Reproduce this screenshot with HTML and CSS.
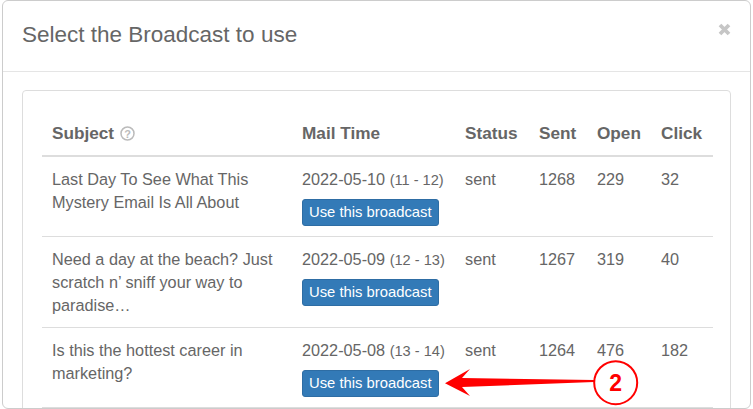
FILE: index.html
```html
<!DOCTYPE html>
<html lang="en">
<head>
    <meta charset="UTF-8">
    <title>Select the Broadcast</title>
    <link rel="stylesheet" href="styles.css">
</head>
<body>
    <div class="modal">
        <div class="modal-header">
            <h4>Select the Broadcast to use</h4>
            <svg class="close" width="13" height="13" viewBox="0 0 13 13">
                <path d="M2 2 L11 11 M11 2 L2 11" stroke="#c6c6c6" stroke-width="3.8" fill="none"/>
            </svg>
        </div>
        <div class="modal-body">
            <div class="panel">
                <table>
                    <colgroup>
                        <col class="col-subject">
                        <col class="col-time">
                        <col class="col-status">
                        <col class="col-sent">
                        <col class="col-open">
                        <col class="col-click">
                    </colgroup>
                    <thead>
                        <tr>
                            <th>Subject
                                <svg class="help" width="15" height="15" viewBox="0 0 15 15">
                                    <circle cx="7.5" cy="7.5" r="6.5" fill="none" stroke="#bbb" stroke-width="1.5"/>
                                    <text x="7.5" y="11.5" text-anchor="middle" class="help-mark">?</text>
                                </svg>
                            </th>
                            <th>Mail Time</th>
                            <th>Status</th>
                            <th>Sent</th>
                            <th>Open</th>
                            <th>Click</th>
                        </tr>
                    </thead>
                    <tbody>
                        <tr>
                            <td>Last Day To See What This Mystery Email Is All About</td>
                            <td>2022-05-10 <small>(11 - 12)</small><a class="btn">Use this broadcast</a></td>
                            <td>sent</td>
                            <td>1268</td>
                            <td>229</td>
                            <td>32</td>
                        </tr>
                        <tr>
                            <td>Need a day at the beach? Just scratch n’ sniff your way to paradise…</td>
                            <td>2022-05-09 <small>(12 - 13)</small><a class="btn">Use this broadcast</a></td>
                            <td>sent</td>
                            <td>1267</td>
                            <td>319</td>
                            <td>40</td>
                        </tr>
                        <tr>
                            <td>Is this the hottest career in marketing?</td>
                            <td>2022-05-08 <small>(13 - 14)</small><a class="btn">Use this broadcast</a></td>
                            <td>sent</td>
                            <td>1264</td>
                            <td>476</td>
                            <td>182</td>
                        </tr>
                    </tbody>
                </table>
            </div>
        </div>
    </div>

    <!-- callout drawn over the table -->
    <svg class="callout" width="210" height="50" viewBox="0 0 210 50">
        <polygon points="1,25.3 26,11 18,20 150,22 150,24 18,29 26,38" fill="#f00"/>
        <circle cx="171.7" cy="24.7" r="21.5" fill="#fff" stroke="#f00" stroke-width="2"/>
        <text x="171.7" y="32.5" text-anchor="middle" class="callout-num">2</text>
    </svg>
</body>
</html>
```

FILE: styles.css
```css
body {
    margin: 0;
    height: 409px;
    overflow: hidden;
    background-color: #fff;
    font-family: "Liberation Sans", Arial, sans-serif;
    font-size: 16.25px;
    line-height: 23px;
    color: #666;
}

.modal {
    margin-left: 2px;
    width: 749px;
    box-sizing: border-box;
    border: 1px solid #ccc;
    border-radius: 6px;
    height: 409px;
    overflow: hidden;
}

.modal-header {
    display: flex;
    justify-content: space-between;
    height: 70px;
    padding: 0 19px;
    border-bottom: 1px solid #e5e5e5;
}

.modal-header h4 {
    margin: 20px 0 0;
    font-size: 22.5px;
    line-height: 27px;
    font-weight: normal;
}

.close {
    margin: 22px 0 0 0;
}

.modal-body {
    padding: 18px 19px;
}

.panel {
    border: 1px solid #ddd;
    border-radius: 4px;
    padding: 19px;
    height: 400px;
}

table {
    width: 671px;
    border-collapse: separate;
    border-spacing: 0;
    table-layout: fixed;
}

.col-subject { width: 250px; }
.col-time { width: 163px; }
.col-status { width: 74px; }
.col-sent { width: 58px; }
.col-open { width: 64px; }
.col-click { width: 62px; }

th {
    padding: 12px 10px 10px;
    text-align: left;
    font-size: 17.2px;
    font-weight: bold;
    border-bottom: 2px solid #ddd;
}

td {
    padding: 11px 10px 10px;
    vertical-align: top;
    border-bottom: 1px solid #ddd;
}

small {
    font-size: 14.6px;
    line-height: 1;
}

.help {
    vertical-align: -2px;
    margin-left: 1px;
}

.help-mark {
    font-size: 11px;
    fill: #bbb;
}

.btn {
    display: block;
    width: fit-content;
    margin-top: 8px;
    padding: 0 6px;
    height: 25px;
    line-height: 25px;
    font-size: 14.8px;
    color: #fff;
    background-color: #337ab7;
    border: 1px solid #2e6da4;
    border-radius: 3px;
}

.callout {
    position: absolute;
    left: 444px;
    top: 358px;
}

.callout-num {
    font-size: 23px;
    font-weight: bold;
    fill: #f00;
}
```
